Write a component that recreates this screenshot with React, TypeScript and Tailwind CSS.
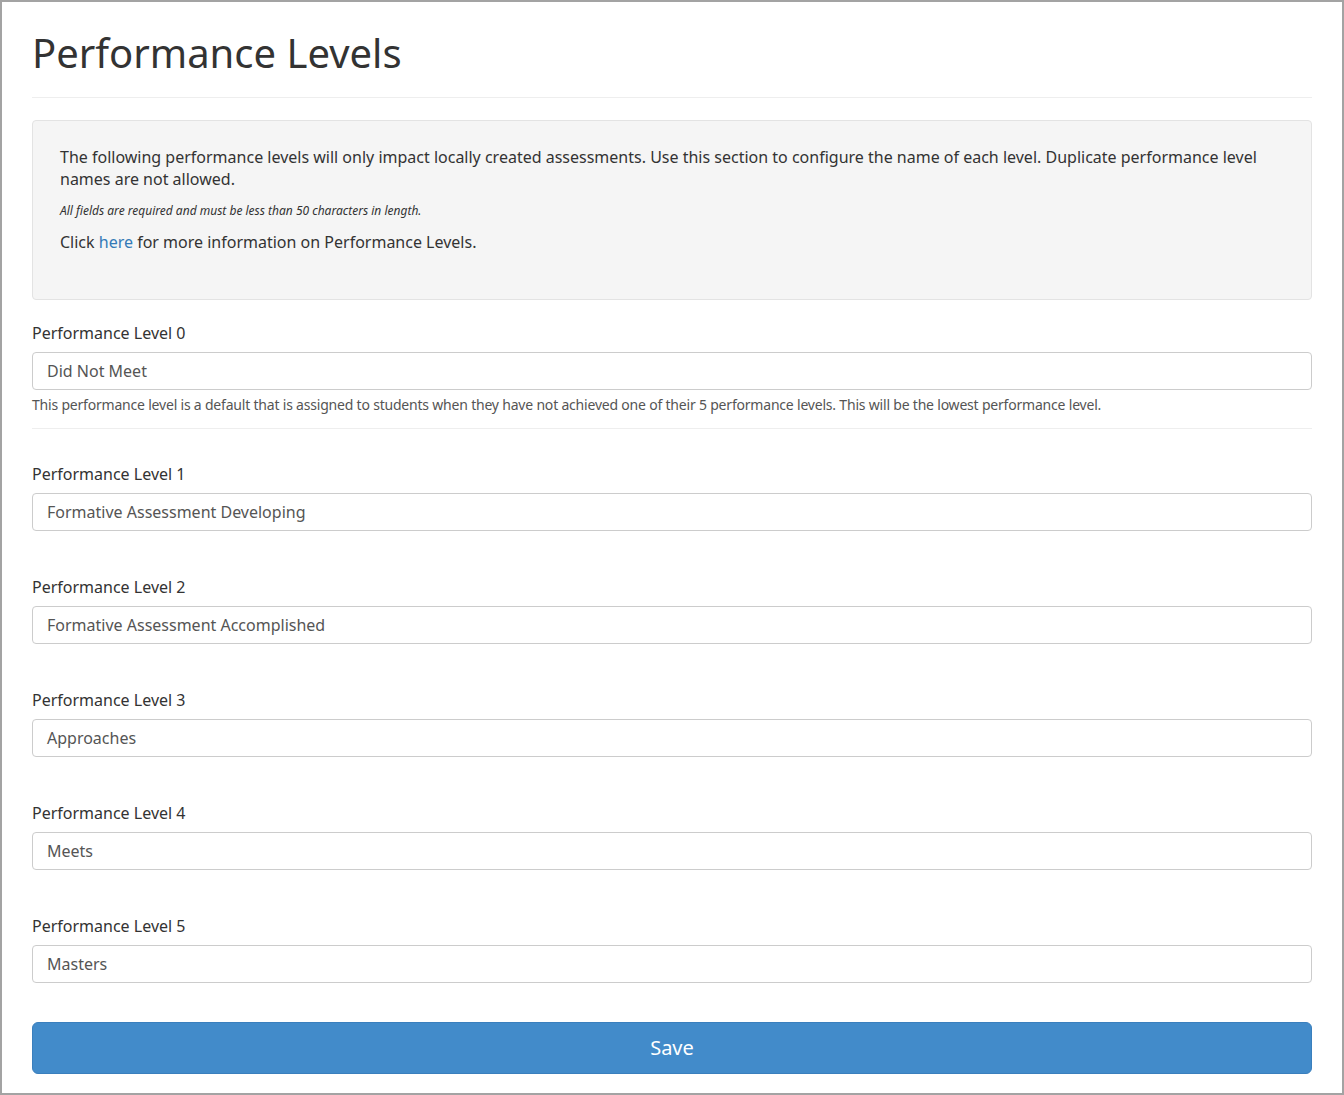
const levels = [
  'Formative Assessment Developing',
  'Formative Assessment Accomplished',
  'Approaches',
  'Meets',
  'Masters',
];

export default function App() {
  return (
    <div className="w-[1344px] h-[1095px] border-2 border-[#a3a3a3] bg-white text-[#333] font-['Liberation_Sans',Arial,sans-serif] overflow-hidden">
      <div className="px-[30px]">
        <h1 className="text-[40px] leading-[44px] pt-[29px] pb-[22px] border-b border-[#eee] text-[#333]">Performance Levels</h1>

        <div className="mt-[22px] h-[180px] rounded border border-[#e3e3e3] bg-[#f5f5f5] px-[27px] pt-[25px] text-[16px]">
          <p className="leading-[22px]">
            The following performance levels will only impact locally created assessments. Use this section to configure the name of each level. Duplicate performance level names are not allowed.
          </p>
          <p className="mt-[12px] text-[12px] italic leading-[18px]">All fields are required and must be less than 50 characters in length.</p>
          <p className="mt-[12px] leading-[20px]">
            Click <a className="text-[#337ab7]">here</a> for more information on Performance Levels.
          </p>
        </div>

        <div className="mt-[23px]">
          <label className="block text-[16px] leading-[20px]">Performance Level 0</label>
          <div className="mt-[9px] h-[38px] rounded border border-[#ccc] px-[14px] flex items-center text-[16px] text-[#555]">Did Not Meet</div>
          <p className="mt-[6px] text-[14px] leading-[18px] text-[#555] tracking-[-0.2px]">
            This performance level is a default that is assigned to students when they have not achieved one of their 5 performance levels. This will be the lowest performance level.
          </p>
          <div className="mt-[14px] border-t border-[#eee]" />
        </div>

        {levels.map((v, i) => (
          <div key={i} className={i === 0 ? 'mt-[35px]' : 'mt-[46px]'}>
            <label className="block text-[16px] leading-[20px]">Performance Level {i + 1}</label>
            <div className="mt-[9px] h-[38px] rounded border border-[#ccc] px-[14px] flex items-center text-[16px] text-[#555]">{v}</div>
          </div>
        ))}

        <button className="mt-[39px] w-full h-[52px] rounded-md bg-[#428bca] border border-[#3a7fbd] text-white text-[20px]">Save</button>
      </div>
    </div>
  );
}
